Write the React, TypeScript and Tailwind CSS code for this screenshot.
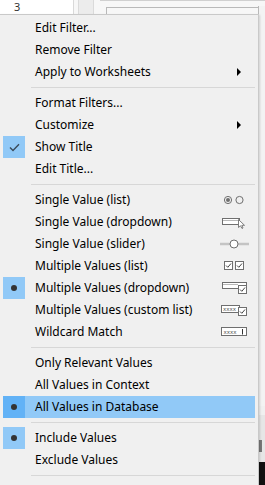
import React from "react";

type Mark = "none" | "check" | "dot";
type Item =
  | { kind: "sep" }
  | {
      kind: "item";
      label: string;
      submenu?: boolean;
      mark?: Mark;
      active?: boolean;
      icon?: React.ReactNode;
    };

const stroke = "#6f6f6f";

const RadioIcon = () => (
  <svg width="32" height="14" viewBox="0 0 32 14">
    <circle cx="10" cy="7" r="3.6" fill="none" stroke={stroke} strokeWidth="1" />
    <circle cx="10" cy="7" r="2" fill={stroke} />
    <circle cx="21.5" cy="7" r="3.6" fill="none" stroke={stroke} strokeWidth="1" />
  </svg>
);

const DropdownIcon = () => (
  <svg width="32" height="14" viewBox="0 0 32 14">
    <rect x="4.5" y="3.5" width="17" height="6" fill="#fff" stroke={stroke} />
    <line x1="5" y1="5.5" x2="21" y2="5.5" stroke="#b8b8b8" />
    <path d="M20.5 4.5 L20.5 12.5 L22.5 10.8 L24 13.5 L25 13 L23.8 10.3 L26.5 10.3 Z" fill="#fff" stroke={stroke} strokeWidth="0.9" strokeLinejoin="round" />
  </svg>
);

const SliderIcon = () => (
  <svg width="32" height="14" viewBox="0 0 32 14">
    <line x1="2" y1="7" x2="31" y2="7" stroke="#c4c4c4" strokeWidth="2.5" />
    <circle cx="16" cy="7" r="4" fill="#fff" stroke={stroke} />
  </svg>
);

const Check = ({ x, y }: { x: number; y: number }) => (
  <g>
    <rect x={x + 0.5} y={y + 0.5} width="8" height="8" fill="#fff" stroke={stroke} />
    <path d={`M${x + 2} ${y + 4.5} L${x + 3.8} ${y + 6.3} L${x + 7} ${y + 2.5}`} fill="none" stroke="#444" strokeWidth="1" />
  </g>
);

const CheckPairIcon = () => (
  <svg width="32" height="14" viewBox="0 0 32 14">
    <Check x={6} y={2} />
    <Check x={17} y={2} />
  </svg>
);

const MultiDropIcon = () => (
  <svg width="32" height="14" viewBox="0 0 32 14">
    <rect x="4.5" y="1.5" width="24" height="6" fill="#fff" stroke={stroke} />
    <line x1="5" y1="3.5" x2="20" y2="3.5" stroke="#b8b8b8" />
    <Check x={20} y={4} />
  </svg>
);

const CustomListIcon = () => (
  <svg width="32" height="14" viewBox="0 0 32 14">
    <rect x="3.5" y="2.5" width="18" height="7" fill="#fff" stroke={stroke} />
    <text x="5" y="8" fontSize="5.5" fontFamily="'DejaVu Sans', sans-serif" fill="#555">xxxx</text>
    <Check x={20} y={4} />
  </svg>
);

const WildcardIcon = () => (
  <svg width="32" height="14" viewBox="0 0 32 14">
    <rect x="3.5" y="2.5" width="25" height="8" fill="#fff" stroke={stroke} />
    <text x="5.5" y="8.5" fontSize="5.5" fontFamily="'DejaVu Sans', sans-serif" fill="#555">xxxx</text>
    <line x1="24.5" y1="4" x2="24.5" y2="9.5" stroke="#333" />
  </svg>
);

const items: Item[] = [
  { kind: "item", label: "Edit Filter..." },
  { kind: "item", label: "Remove Filter" },
  { kind: "item", label: "Apply to Worksheets", submenu: true },
  { kind: "sep" },
  { kind: "item", label: "Format Filters..." },
  { kind: "item", label: "Customize", submenu: true },
  { kind: "item", label: "Show Title", mark: "check" },
  { kind: "item", label: "Edit Title..." },
  { kind: "sep" },
  { kind: "item", label: "Single Value (list)", icon: <RadioIcon /> },
  { kind: "item", label: "Single Value (dropdown)", icon: <DropdownIcon /> },
  { kind: "item", label: "Single Value (slider)", icon: <SliderIcon /> },
  { kind: "item", label: "Multiple Values (list)", icon: <CheckPairIcon /> },
  { kind: "item", label: "Multiple Values (dropdown)", mark: "dot", icon: <MultiDropIcon /> },
  { kind: "item", label: "Multiple Values (custom list)", icon: <CustomListIcon /> },
  { kind: "item", label: "Wildcard Match", icon: <WildcardIcon /> },
  { kind: "sep" },
  { kind: "item", label: "Only Relevant Values" },
  { kind: "item", label: "All Values in Context" },
  { kind: "item", label: "All Values in Database", mark: "dot", active: true },
  { kind: "sep" },
  { kind: "item", label: "Include Values", mark: "dot" },
  { kind: "item", label: "Exclude Values" },
  { kind: "sep" },
];

const MenuRow = ({ item }: { item: Extract<Item, { kind: "item" }> }) => {
  const mark = item.mark ?? "none";
  return (
    <div className={`flex h-[22px] items-center ${item.active ? "bg-[#91c9f7]" : ""}`}>
      <div
        className={`flex h-[22px] w-[22px] shrink-0 items-center justify-center ${
          mark === "none" ? "" : item.active ? "bg-[#62b2f6]" : "bg-[#91c9f7]"
        }`}
      >
        {mark === "check" && (
          <svg width="11" height="9" viewBox="0 0 11 9">
            <path d="M1 4.5 L4 7.5 L10 1.2" fill="none" stroke="#3a4a5a" strokeWidth="1.4" />
          </svg>
        )}
        {mark === "dot" && <div className="h-[6px] w-[6px] rounded-full bg-[#333]" />}
      </div>
      <span className="ml-[10px] flex-1 whitespace-nowrap text-[12px] text-black">{item.label}</span>
      {item.submenu && (
        <svg width="5" height="8" viewBox="0 0 5 8" className="mr-[13px]">
          <path d="M0 0 L4 4 L0 8 Z" fill="#000" />
        </svg>
      )}
      {item.icon && <div className="mr-[5px] flex items-center">{item.icon}</div>}
    </div>
  );
};

export default function App() {
  return (
    <div
      className="relative h-[485px] w-[265px] overflow-hidden bg-[#f0f0f0]"
      style={{ fontFamily: "'Noto Sans', 'Open Sans', sans-serif" }}
    >
      {/* background window bits */}
      <div className="flex h-[14px]">
        <div className="w-[74px] border-r border-[#d9d9d9] bg-white pl-[14px] text-[11px] leading-[14px] text-[#333]">
          3
        </div>
        <div className="w-[4px] bg-[#f7f7f7]" />
        <div className="w-[16px] border-x border-[#dadada] bg-[#ececec]" />
        <div className="w-[6px] bg-[#f7f7f7]" />
        <div className="flex-1 border-t border-[#d0d0d0] bg-[#f7f7f7] pl-[6px] pt-[6px]">
          <div className="h-full border-l border-t border-[#b9b9b9]" />
        </div>
      </div>
      <div className="absolute right-0 top-[6px] h-[400px] w-[7px] border-l border-[#b9b9b9] bg-[#f3f3f3]" />
      <div className="absolute bottom-0 right-0 h-[70px] w-[7px] bg-[#e6e6e6]">
        <div className="ml-[1px] mt-[25px] h-[12px] w-[3px] bg-[#777]" />
        <div className="mt-[10px] h-[25px] w-[7px] bg-[#111]" />
      </div>

      {/* context menu */}
      <div className="absolute left-[-1px] top-[14px] h-[480px] w-[260px] border border-[#c9c9c9] bg-[#f0f0f0] px-[3px] pt-[2px] shadow-[1px_1px_2px_rgba(0,0,0,0.15)]">
        {items.map((it, i) =>
          it.kind === "sep" ? (
            <div key={i} className="flex h-[9px] items-center pl-[28px]">
              <div className="h-px w-full bg-[#d7d7d7]" />
            </div>
          ) : (
            <MenuRow key={i} item={it} />
          )
        )}
      </div>
    </div>
  );
}
